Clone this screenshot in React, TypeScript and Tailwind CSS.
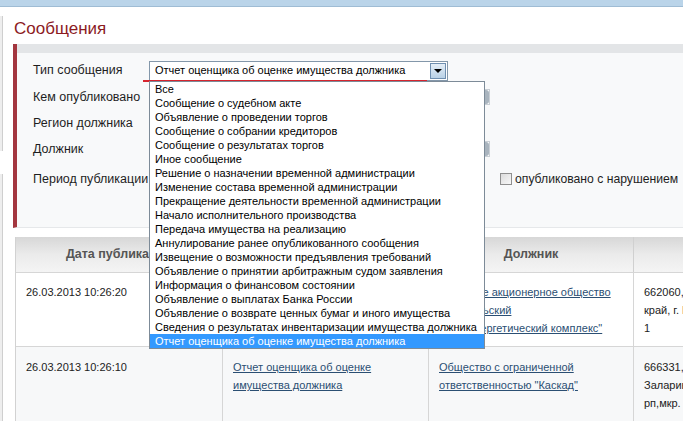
import React from "react";

const items = [
  "Все",
  "Сообщение о судебном акте",
  "Объявление о проведении торгов",
  "Сообщение о собрании кредиторов",
  "Сообщение о результатах торгов",
  "Иное сообщение",
  "Решение о назначении временной администрации",
  "Изменение состава временной администрации",
  "Прекращение деятельности временной администрации",
  "Начало исполнительного производства",
  "Передача имущества на реализацию",
  "Аннулирование ранее опубликованного сообщения",
  "Извещение о возможности предъявления требований",
  "Объявление о принятии арбитражным судом заявления",
  "Информация о финансовом состоянии",
  "Объявление о выплатах Банка России",
  "Объявление о возврате ценных бумаг и иного имущества",
  "Сведения о результатах инвентаризации имущества должника",
  "Отчет оценщика об оценке имущества должника",
];

function Label({ children }: { children: React.ReactNode }) {
  return <div className="w-[116px] shrink-0 text-[12.5px] text-[#1e1e1e]">{children}</div>;
}

function FakeInput() {
  return (
    <div className="flex h-[16px] w-[341px] border border-[#c8ced4] bg-white">
      <div className="flex-1" />
      <div className="h-full w-[6px] rounded-r-[3px] bg-[#a9b4be]" />
    </div>
  );
}

const link = "text-[#2b4f73] underline";

export default function App() {
  return (
    <div
      className="relative h-[421px] w-[683px] overflow-hidden bg-white"
      style={{ fontFamily: '"Liberation Sans", Arial, sans-serif' }}
    >
      <div className="h-[7px] border-b border-[#9fbcd4] bg-[#bad4e9]" />
      <div className="flex">
        {/* left sidebar edge */}
        <div className="flex w-[3px] shrink-0 flex-col">
          <div className="mt-[9px] h-[135px] border-r border-[#cfcfcf] bg-[#eeeeee]" />
          <div className="mt-[23px] h-[300px] border-r border-[#cfcfcf] bg-[#eeeeee]" />
        </div>
        <div className="ml-[10px] flex-1">
          <div className="h-[37px] pl-[1px] pt-[12px] text-[17px] leading-[20px] text-[#8c1b1f]">Сообщения</div>

          {/* filter panel */}
          <div className="relative h-[184px] border-b border-[#e6e8ea] border-l-4 border-l-[#a3363f] bg-[#f8f9fa]">
            <div className="h-[9px] bg-[#e3e5e7]" />
            <div className="pl-[16px] pt-[4px]">
              <div className="flex h-[27px] items-center">
                <Label>Тип сообщения</Label>
                <div className="relative z-20">
                  <div className="flex h-[20px] w-[299px] items-center border border-[#8397aa] bg-white">
                    <div className="flex-1 pl-[5px] text-[11px] text-black">Отчет оценщика об оценке имущества должника</div>
                    <div className="mr-[1px] flex h-[16px] w-[16px] items-center justify-center border border-[#6f8fb0] bg-linear-to-b from-[#e4eef7] to-[#b9d1e6]">
                      <div className="h-0 w-0 border-x-[4px] border-t-[4px] border-x-transparent border-t-black" />
                    </div>
                  </div>
                  <div className="absolute left-[-6px] top-[19px] h-[2px] w-[284px] bg-[#d6242e]" />
                  <div className="absolute left-0 top-[20px] w-[336px] border border-[#7d8b98] bg-white">
                    {items.map((it, i) => (
                      <div
                        key={i}
                        className={
                          "h-[14px] whitespace-nowrap pl-[5px] text-[11px] leading-[14px] " +
                          (i === items.length - 1 ? "bg-[#3399ff] text-white" : "text-black")
                        }
                      >
                        {it}
                      </div>
                    ))}
                  </div>
                </div>
              </div>
              <div className="flex h-[26px] items-center">
                <Label>Кем опубликовано</Label>
                <FakeInput />
              </div>
              <div className="flex h-[26px] items-center">
                <Label>Регион должника</Label>
              </div>
              <div className="flex h-[26px] items-center">
                <Label>Должник</Label>
                <FakeInput />
              </div>
              <div className="mt-[4px] flex h-[26px] items-center">
                <Label>Период публикации</Label>
                <div className="w-[351px]" />
                <div className="h-[12px] w-[12px] border border-[#8f8f8f] bg-linear-to-br from-[#dcdcdc] to-[#f8f8f8]" />
                <div className="ml-[3px] whitespace-nowrap text-[12.2px] text-[#1e1e1e]">опубликовано с нарушением</div>
              </div>
            </div>
          </div>

          {/* table */}
          <div className="ml-[2px] mt-[9px] w-[900px] border-l border-[#d2d2d2] text-[11px] text-[#222]">
            <div className="grid h-[36px] grid-cols-[206px_206px_205px_283px] border-b border-[#d6d6d6] bg-linear-to-b from-[#d7d7d7] via-[#ebebeb] to-[#f4f4f4] text-[12.5px] font-bold text-[#555]">
              <div className="flex items-center justify-center">Дата публикации</div>
              <div className="flex items-center justify-center border-l border-[#d0d0d0]">Тип сообщения</div>
              <div className="flex items-center justify-center border-l border-[#d0d0d0]">Должник</div>
              <div className="flex items-center justify-center border-l border-[#d0d0d0]">Адрес должника</div>
            </div>
            <div className="grid h-[74px] grid-cols-[206px_206px_205px_283px] border-b border-[#d6d6d6] bg-white leading-[18px]">
              <div className="pl-[10px] pt-[10px]">26.03.2013 10:26:20</div>
              <div className="border-l border-[#d6d6d6] pl-[10px] pt-[10px]">
                <span className={link}>Сообщение о судебном акте</span>
              </div>
              <div className="border-l border-[#d6d6d6] pl-[10px] pt-[10px]">
                <div className={link}>Открытое акционерное общество</div>
                <div className={link}>"Боготольский</div>
                <div className={link}>теплоэнергетический комплекс"</div>
              </div>
              <div className="whitespace-nowrap border-l border-[#d6d6d6] pl-[10px] pt-[10px]">
                <div>662060, г. Боготол, Красноярский</div>
                <div>край, г. Боготол, ул. Кирова,</div>
                <div>1</div>
              </div>
            </div>
            <div className="grid h-[90px] grid-cols-[206px_206px_205px_283px] bg-[#f7f8f9] leading-[18px]">
              <div className="pl-[10px] pt-[11px]">26.03.2013 10:26:10</div>
              <div className="border-l border-[#d6d6d6] pl-[10px] pt-[11px]">
                <div className={link}>Отчет оценщика об оценке</div>
                <div className={link}>имущества должника</div>
              </div>
              <div className="border-l border-[#d6d6d6] pl-[10px] pt-[11px]">
                <div className={link}>Общество с ограниченной</div>
                <div className={link}>ответственностью "Каскад"</div>
              </div>
              <div className="whitespace-nowrap border-l border-[#d6d6d6] pl-[10px] pt-[11px]">
                <div>666331, Иркутская обл,</div>
                <div>Заларинский р-н, Залари</div>
                <div>рп,мкр. Северный</div>
              </div>
            </div>
          </div>
        </div>
      </div>
    </div>
  );
}
